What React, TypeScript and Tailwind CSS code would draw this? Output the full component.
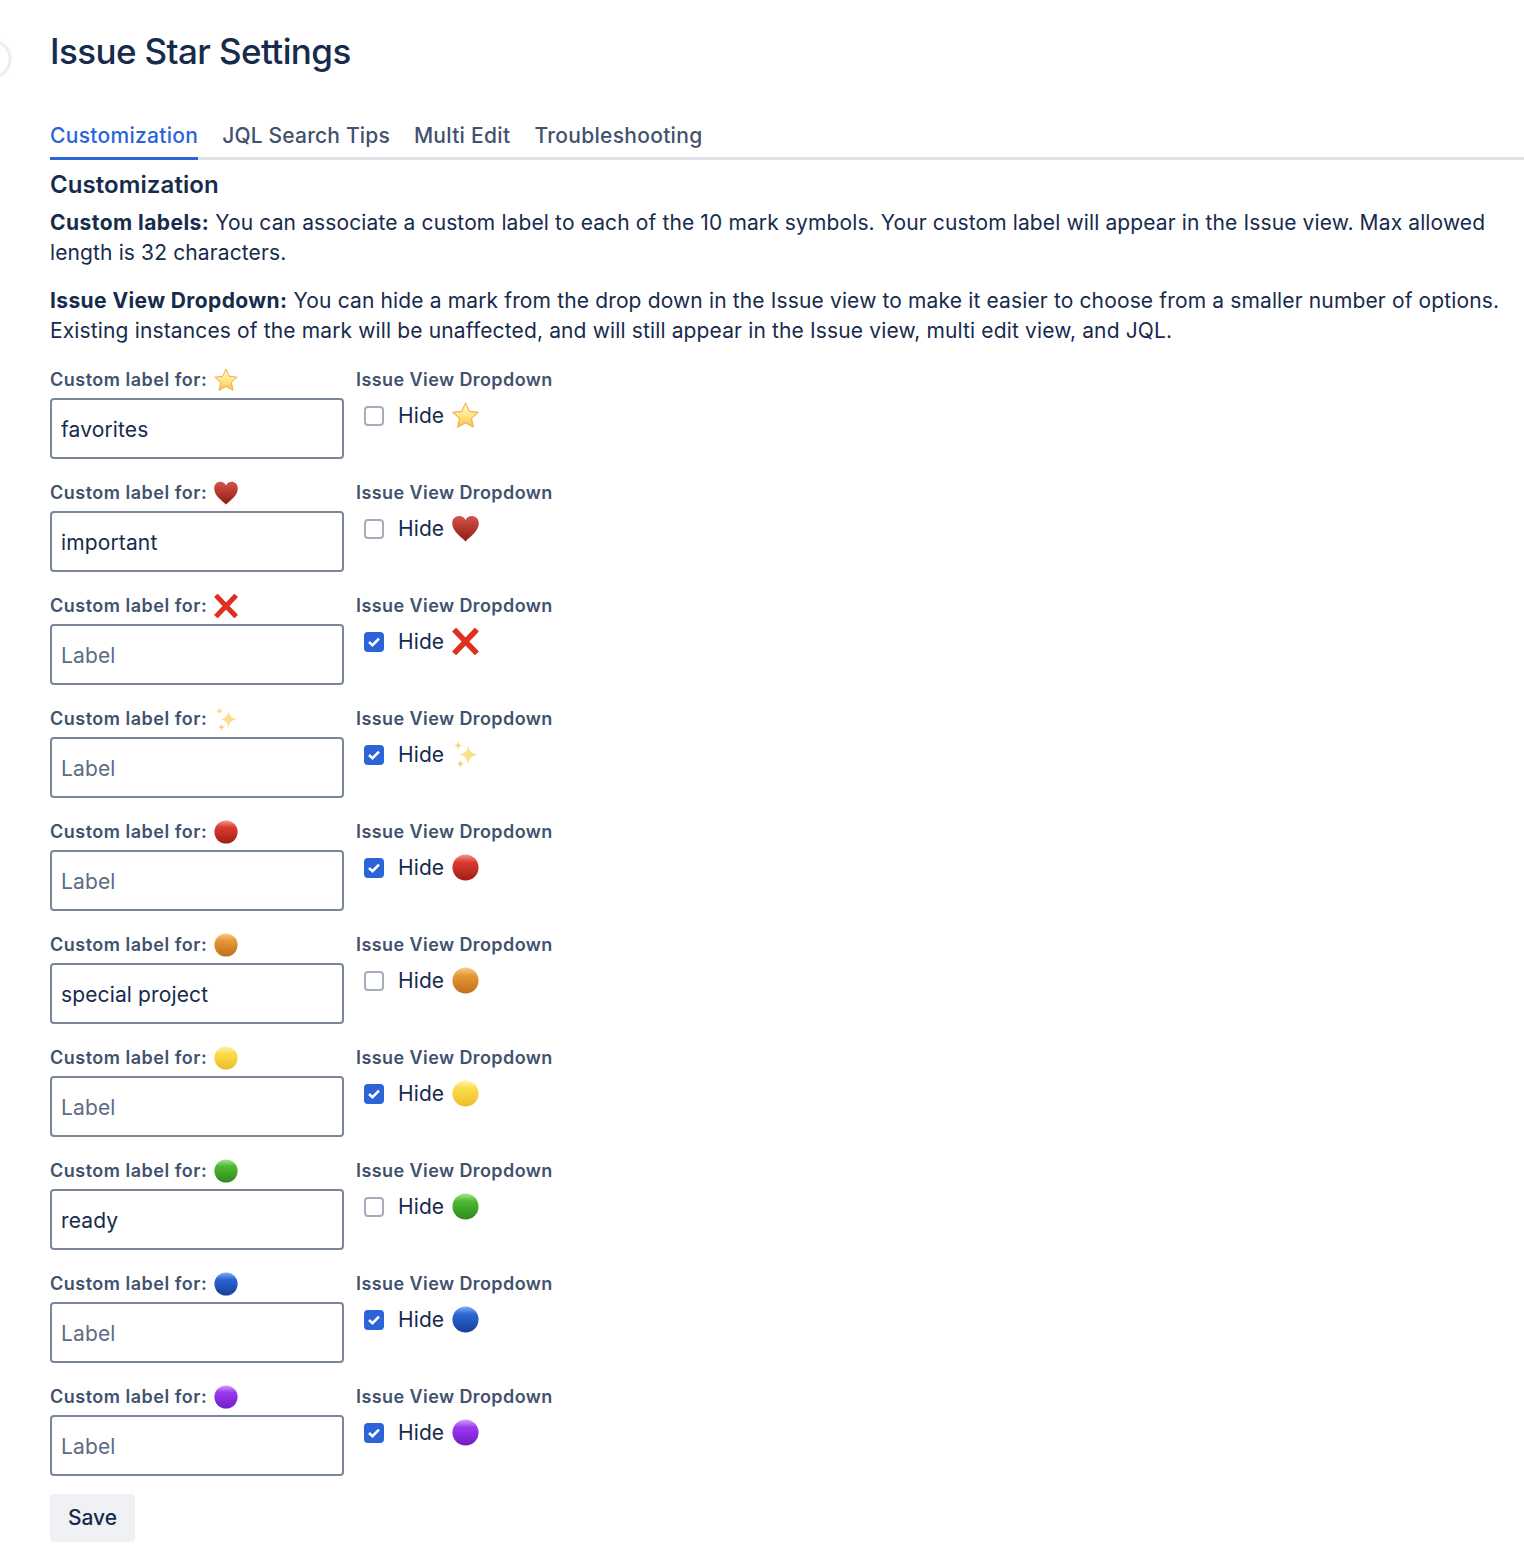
import React, { useId } from "react";

type Mark = "star" | "heart" | "x" | "sparkle" | "red" | "orange" | "yellow" | "green" | "blue" | "purple";

const balls: Record<string, [string, string, string]> = {
  red: ["#f49a90", "#dc3a32", "#a01d16"],
  orange: ["#f8cf8c", "#e59a38", "#bf6f1a"],
  yellow: ["#fff3b0", "#fcdc48", "#ecbd2a"],
  green: ["#a6e690", "#4fb832", "#2c8a1c"],
  blue: ["#86aef4", "#2c66d4", "#163f99"],
  purple: ["#d5a2fa", "#9c38f0", "#6e1ec6"],
};

function Emoji({ mark, size }: { mark: Mark; size: number }) {
  const id = useId();
  const cls = "shrink-0";
  if (mark === "star") {
    return (
      <svg width={size} height={size} viewBox="0 0 24 24" className={cls}>
        <defs>
          <linearGradient id={id} x1="0" y1="0" x2="0" y2="1">
            <stop offset="0" stopColor="#fff8d0" />
            <stop offset="0.55" stopColor="#ffe680" />
            <stop offset="1" stopColor="#f8c050" />
          </linearGradient>
        </defs>
        <path d="M12 1l3.300 7.300 7.900.9-5.900 5.300 1.700 7.800L12 18.400l-7 4 1.700-7.900L.8 9.200l7.900-.9z" fill={`url(#${id})`} stroke="#eeb050" strokeWidth="1" strokeLinejoin="round" />
      </svg>
    );
  }
  if (mark === "heart") {
    return (
      <svg width={size} height={size} viewBox="0 0 24 24" className={cls}>
        <defs>
          <linearGradient id={id} x1="0" y1="0" x2="0" y2="1">
            <stop offset="0" stopColor="#d4544a" />
            <stop offset="1" stopColor="#8f1a12" />
          </linearGradient>
        </defs>
        <path d="M12 23.500C8 19.500.2 14.500.2 7.400.2 3.400 3 .8 6.300.8c2.500 0 4.600 1.300 5.700 3.600C13.100 2.100 15.200.8 17.700.8c3.300 0 6.100 2.600 6.100 6.600C23.800 14.500 16 19.500 12 23.500z" fill={`url(#${id})`} />
      </svg>
    );
  }
  if (mark === "x") {
    return (
      <svg width={size} height={size} viewBox="0 0 24 24" className={cls}>
        <path d="M3.600 3.200L20.400 20.800M20.400 3.200L3.600 20.800" stroke="#de2f1f" strokeWidth="5" strokeLinecap="square" fill="none" />
      </svg>
    );
  }
  if (mark === "sparkle") {
    return (
      <svg width={size} height={size} viewBox="0 0 24 24" className={cls}>
        <path d="M14.500 4c.9 5 2.900 7.200 8.500 8.200-5.600.9-7.600 3-8.500 8.500-.9-5.500-2.900-7.600-8-8.500 5.100-1 7.100-3.200 8-8.200z" fill="#fbe08a" />
        <path d="M5.500 0c.4 2.600 1.300 3.500 3.700 3.900-2.400.4-3.300 1.300-3.700 3.900-.4-2.600-1.300-3.500-3.700-3.900 2.400-.4 3.300-1.300 3.700-3.900z" fill="#fad98a" />
        <path d="M7.500 16.500c.4 2.400 1.200 3.300 3.300 3.700-2.100.4-2.900 1.200-3.300 3.700-.4-2.500-1.200-3.300-3.300-3.700 2.100-.4 2.900-1.300 3.300-3.700z" fill="#f8cf7c" />
      </svg>
    );
  }
  const [a, b, c] = balls[mark];
  return (
    <svg width={size} height={size} viewBox="0 0 24 24" className={cls}>
      <defs>
        <linearGradient id={id} x1="0" y1="0" x2="0" y2="1">
          <stop offset="0" stopColor={a} />
          <stop offset="0.3" stopColor={b} />
          <stop offset="1" stopColor={c} />
        </linearGradient>
      </defs>
      <circle cx="12" cy="12" r="11.600" fill={`url(#${id})`} />
    </svg>
  );
}

const rows: { mark: Mark; value: string; hidden: boolean }[] = [
  { mark: "star", value: "favorites", hidden: false },
  { mark: "heart", value: "important", hidden: false },
  { mark: "x", value: "", hidden: true },
  { mark: "sparkle", value: "", hidden: true },
  { mark: "red", value: "", hidden: true },
  { mark: "orange", value: "special project", hidden: false },
  { mark: "yellow", value: "", hidden: true },
  { mark: "green", value: "ready", hidden: false },
  { mark: "blue", value: "", hidden: true },
  { mark: "purple", value: "", hidden: true },
];

function Row({ mark, value, hidden }: { mark: Mark; value: string; hidden: boolean }) {
  return (
    <div className="flex h-[113px] gap-3">
      <div className="w-[294px]">
        <div className="flex h-[24px] items-center gap-[7px] text-[18px] font-semibold tracking-[0.5px] text-[#42526e]">
          <span className="mt-[-1px]">Custom label for:</span>
          <Emoji mark={mark} size={24} />
        </div>
        <input
          readOnly
          value={value}
          placeholder="Label"
          className="mt-[6px] block h-[61px] w-full rounded-[4px] border-2 border-[#7a869a] bg-white px-[9px] pt-[1px] text-[21px] tracking-[0.13px] text-[#172b4d] outline-none placeholder:text-[#5e6c84]"
        />
      </div>
      <div>
        <div className="h-[24px] text-[18px] leading-[24px] font-semibold tracking-[0.42px] text-[#42526e]">Issue View Dropdown</div>
        <div className="mt-[9px] flex h-[30px] items-center">
          <span className="ml-[8px] block h-[20px] w-[20px]">
            {hidden ? (
              <span className="flex h-[20px] w-[20px] items-center justify-center rounded-[4px] bg-[#2b63d9]">
                <svg width="14" height="12" viewBox="0 0 14 12" fill="none">
                  <path d="M2 6L5.500 9.200L12 2.600" stroke="#ffffff" strokeWidth="2.600" />
                </svg>
              </span>
            ) : (
              <span className="block h-[20px] w-[20px] rounded-[4px] border-2 border-[#a5adba] bg-white" />
            )}
          </span>
          <span className="ml-[14px] text-[21px] tracking-[0.1px] text-[#172b4d]">Hide</span>
          <span className="ml-[8px] mt-[-2px]">
            <Emoji mark={mark} size={27} />
          </span>
        </div>
      </div>
    </div>
  );
}

export default function App() {
  return (
    <div className="relative h-[1556px] w-full overflow-hidden bg-white pl-[50px] font-['Inter',sans-serif] text-[#172b4d]">
      <div className="absolute top-[42px] left-[-25px] h-[34px] w-[34px] rounded-full bg-white shadow-[0_0_4px_rgba(9,30,66,0.3)]" />
      <h1 className="pt-[29px] text-[35px] leading-[44px] font-medium tracking-[-0.6px] text-[#172b4d]">Issue Star Settings</h1>
      <div className="mt-[41px] flex h-[46px] gap-[24px] border-b-[3px] border-[#dfe1e6] text-[21px] font-medium tracking-[0.3px] text-[#42526e]">
        <div className="mb-[-3px] h-[46px] border-b-[3px] border-[#2b63d9] leading-[43px] text-[#2b63d9]">Customization</div>
        <div className="h-[43px] leading-[43px] tracking-[0.17px]">JQL Search Tips</div>
        <div className="h-[43px] leading-[43px]">Multi Edit</div>
        <div className="h-[43px] leading-[43px]">Troubleshooting</div>
      </div>
      <h2 className="mt-[9px] text-[24px] leading-[32px] font-semibold tracking-[0.08px] text-[#172b4d]">Customization</h2>
      <p className="mt-[7px] pr-[20px] text-[21px] leading-[30px] tracking-[0.12px]">
        <b className="font-bold tracking-[0.45px]">Custom labels:</b> You can associate a custom label to each of the 10 mark symbols. Your custom label will appear in the Issue view. Max allowed length is 32 characters.
      </p>
      <p className="mt-[18px] pr-[20px] text-[21px] leading-[30px] tracking-[0.14px]">
        <b className="font-bold tracking-[0.4px]">Issue View Dropdown:</b> You can hide a mark from the drop down in the Issue view to make it easier to choose from a smaller number of options. Existing instances of the mark will be unaffected, and will still appear in the Issue view, multi edit view, and JQL.
      </p>
      <div className="mt-[22px]">
        {rows.map((r) => (
          <Row key={r.mark} {...r} />
        ))}
      </div>
      <button className="mt-[-4px] block h-[48px] w-[85px] rounded-[4px] bg-[#f0f1f4] text-[21px] font-medium text-[#172b4d]">Save</button>
    </div>
  );
}
